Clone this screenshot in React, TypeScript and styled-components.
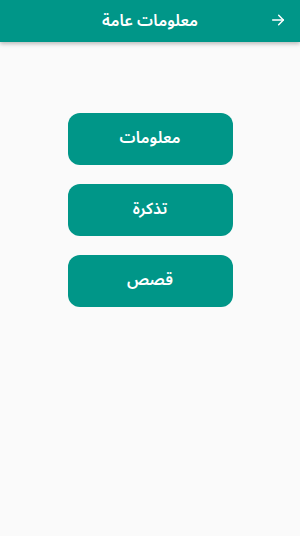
import React from "react";
import styled, { createGlobalStyle } from "styled-components";

const Global = createGlobalStyle`
  html, body { margin: 0; padding: 0; background: #fafafa; }
  body { font-family: "Noto Sans Arabic", "Noto Sans", "DejaVu Sans", sans-serif; }
  * { box-sizing: border-box; }
`;

const Page = styled.div`
  width: 300px;
  height: 536px;
  background: #fafafa;
  display: flex;
  flex-direction: column;
`;

const Header = styled.header`
  height: 42px;
  background: #009688;
  box-shadow: 0 2px 4px rgba(0, 0, 0, 0.25);
  display: flex;
  align-items: center;
  justify-content: center;
  position: relative;
  direction: rtl;
`;

const Title = styled.h1`
  margin: 0;
  color: #fff;
  font-size: 16px;
  font-weight: 600;
`;

const Back = styled.button`
  position: absolute;
  right: 13px;
  top: 11px;
  width: 18px;
  height: 18px;
  padding: 0;
  border: none;
  background: transparent;
  display: flex;
  align-items: center;
  justify-content: center;
`;

const Menu = styled.nav`
  display: flex;
  flex-direction: column;
  align-items: center;
  gap: 19px;
  padding-top: 71px;
  direction: rtl;
`;

const MenuButton = styled.button`
  width: 165px;
  height: 52px;
  border: none;
  border-radius: 12px;
  background: #009688;
  color: #fff;
  font-family: inherit;
  font-size: 16px;
  font-weight: 600;
  display: flex;
  align-items: center;
  justify-content: center;
  padding: 0 0 2px;
`;

export default function App() {
  return (
    <Page>
      <Global />
      <Header>
        <Title>معلومات عامة</Title>
        <Back aria-label="رجوع">
          <svg width="16" height="16" viewBox="0 0 24 24" fill="none" stroke="#fff" strokeWidth="2.2" strokeLinecap="round" strokeLinejoin="round">
            <path d="M4 12h16" />
            <path d="M13 5l7 7-7 7" />
          </svg>
        </Back>
      </Header>
      <Menu>
        <MenuButton>معلومات</MenuButton>
        <MenuButton>تذكرة</MenuButton>
        <MenuButton>قصص</MenuButton>
      </Menu>
    </Page>
  );
}
